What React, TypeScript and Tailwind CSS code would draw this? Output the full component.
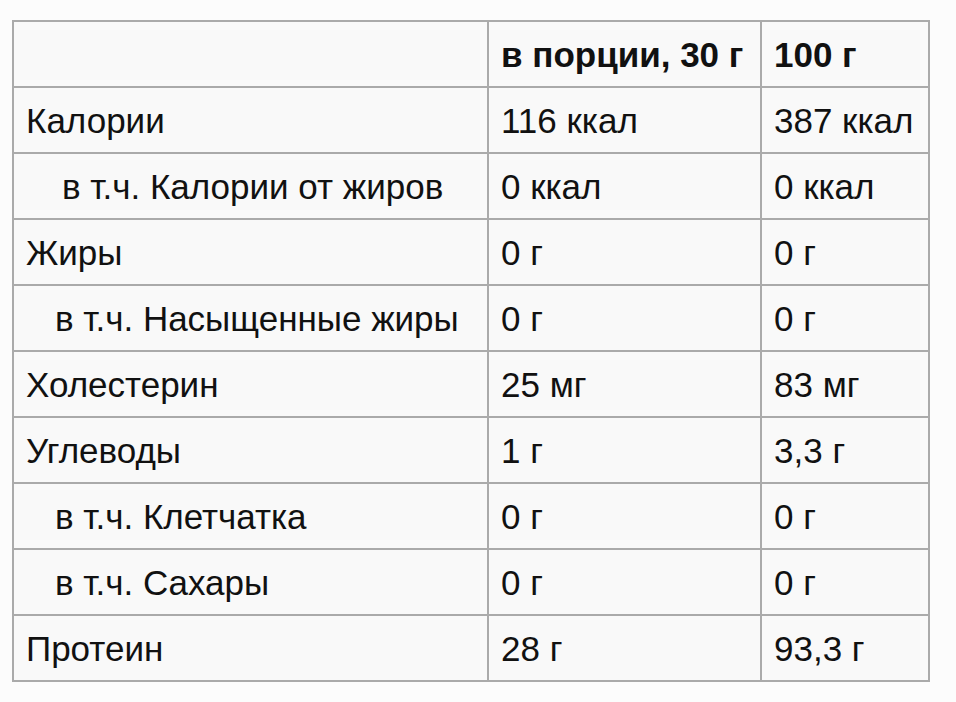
import React from "react";

type Row = { label: string; indent?: "sm" | "lg"; portion: string; per100: string };

const rows: Row[] = [
  { label: "Калории", portion: "116 ккал", per100: "387 ккал" },
  { label: "в т.ч. Калории от жиров", indent: "lg", portion: "0 ккал", per100: "0 ккал" },
  { label: "Жиры", portion: "0 г", per100: "0 г" },
  { label: "в т.ч. Насыщенные жиры", indent: "sm", portion: "0 г", per100: "0 г" },
  { label: "Холестерин", portion: "25 мг", per100: "83 мг" },
  { label: "Углеводы", portion: "1 г", per100: "3,3 г" },
  { label: "в т.ч. Клетчатка", indent: "sm", portion: "0 г", per100: "0 г" },
  { label: "в т.ч. Сахары", indent: "sm", portion: "0 г", per100: "0 г" },
  { label: "Протеин", portion: "28 г", per100: "93,3 г" },
];

const cell = "border-2 border-[#aaaaaa] h-[66px] pl-3 pr-1 align-middle whitespace-nowrap";

export default function App() {
  return (
    <div
      className="min-h-[702px] w-[956px] bg-[#fcfcfc] pt-5 pl-3 text-[#111] text-[35px] leading-none"
      style={{ fontFamily: '"Liberation Sans", Arial, sans-serif' }}
    >
      <table className="border-collapse bg-[#f9f9f9] w-[918px] table-fixed">
        <colgroup>
          <col className="w-[475px]" />
          <col className="w-[273px]" />
          <col />
        </colgroup>
        <thead>
          <tr>
            <th className={cell}></th>
            <th className={`${cell} text-left font-bold`}>в порции, 30 г</th>
            <th className={`${cell} text-left font-bold`}>100 г</th>
          </tr>
        </thead>
        <tbody>
          {rows.map((r) => (
            <tr key={r.label}>
              <td
                className={`${cell} ${
                  r.indent === "lg" ? "pl-[48px]" : r.indent === "sm" ? "pl-[41px]" : ""
                }`}
              >
                {r.label}
              </td>
              <td className={cell}>{r.portion}</td>
              <td className={cell}>{r.per100}</td>
            </tr>
          ))}
        </tbody>
      </table>
    </div>
  );
}
